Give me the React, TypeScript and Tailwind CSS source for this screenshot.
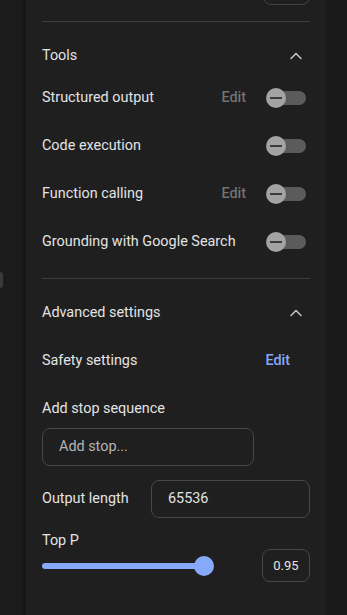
import { ChevronUp } from "lucide-react";

function Toggle() {
    return (
        <div className="relative w-10 h-5 shrink-0 mr-1">
            <div className="absolute left-[3px] right-0 top-[3px] h-[14px] rounded-full bg-[#5b5b5b]" />
            <div className="absolute left-0 top-0 w-5 h-5 rounded-full bg-[#a3a3a3] flex items-center justify-center">
                <div className="w-3 h-[2px] bg-[#3c3c3c]" />
            </div>
        </div>
    );
}

function ToolRow({ label, edit }: { label: string; edit?: boolean }) {
    return (
        <div className="h-12 flex items-center justify-between">
            <span>{label}</span>
            <div className="flex items-center gap-5">
                {edit && <span className="text-[#727272] font-medium">Edit</span>}
                <Toggle />
            </div>
        </div>
    );
}

function SectionHeader({ title }: { title: string }) {
    return (
        <div className="h-6 flex items-center justify-between">
            <span>{title}</span>
            <ChevronUp size={20} strokeWidth={1.8} className="mr-1 text-[#c4c7c5]" />
        </div>
    );
}

export default function App() {
    const tools = [
        { label: "Structured output", edit: true },
        { label: "Code execution" },
        { label: "Function calling", edit: true },
        { label: "Grounding with Google Search" },
    ];

    return (
        <div className="h-[615px] w-[347px] overflow-hidden flex bg-[#1b1b1b] text-[14.4px] text-[#e3e3e3] font-['Roboto',sans-serif]">
            <div className="w-[22px] shrink-0 flex flex-col">
                <div className="mt-[272px] h-4 w-[3px] rounded-r-full bg-[#3a3a3a]" />
            </div>
            <div className="w-[4px] shrink-0 bg-[#171717]" />
            <div className="w-[300px] shrink-0 bg-[#1f1f1f] px-4 flex flex-col">
                <div className="-mt-[27px] flex justify-end">
                    <div className="w-[47px] h-8 rounded-lg border border-[#444]" />
                </div>
                <div className="mt-4 h-px bg-[#3c3c3c]" />

                <div className="mt-[22px]">
                    <SectionHeader title="Tools" />
                </div>
                <div className="mt-[6px]">
                    {tools.map((t) => (
                        <ToolRow key={t.label} label={t.label} edit={t.edit} />
                    ))}
                </div>
                <div className="mt-3 h-px bg-[#3c3c3c]" />

                <div className="mt-[22px]">
                    <SectionHeader title="Advanced settings" />
                </div>
                <div className="mt-3 h-12 flex items-center justify-between">
                    <span>Safety settings</span>
                    <span className="mr-5 text-[#87a9fa] font-medium">Edit</span>
                </div>
                <div className="mt-3 h-6 flex items-center">Add stop sequence</div>
                <div className="mt-[7px] w-[212px] h-[38px] rounded-lg border border-[#474747] flex items-center px-4 text-[#b4b4b4]">
                    Add stop...
                </div>
                <div className="mt-[14px] flex items-center justify-between">
                    <span>Output length</span>
                    <div className="w-[159px] h-[38px] rounded-lg border border-[#474747] flex items-center px-4">
                        65536
                    </div>
                </div>
                <div className="mt-[15px] h-4 flex items-center">Top P</div>
                <div className="h-[33px] flex items-center justify-between">
                    <div className="relative w-[172px] h-5 flex items-center">
                        <div className="w-[162px] h-[6px] rounded-full bg-[#87a9fa]" />
                        <div className="absolute left-[152px] top-0 w-5 h-5 rounded-full bg-[#87a9fa]" />
                    </div>
                    <div className="w-12 h-[33px] rounded-lg border border-[#474747] flex items-center justify-center text-[13px]">
                        0.95
                    </div>
                </div>
            </div>
            <div className="flex-1 bg-[#1a1a1a]" />
        </div>
    );
}
